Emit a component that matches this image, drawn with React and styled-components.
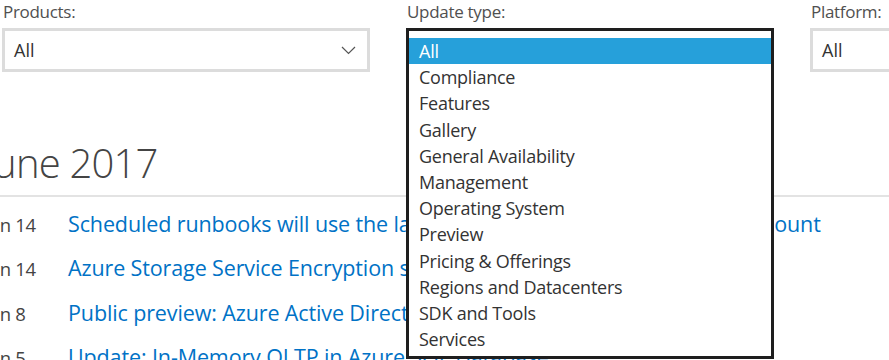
import React from 'react';
import styled, { createGlobalStyle } from 'styled-components';

const GlobalStyle = createGlobalStyle`
    html, body {
        margin: 0;
        padding: 0;
        overflow: hidden;
        background: #fff;
    }
    body {
        font-family: "Open Sans", "Noto Sans", sans-serif;
        color: #333;
    }
`;

const Page = styled.div`
    width: 889px;
    height: 360px;
    overflow: hidden;
`;

const FilterBar = styled.div`
    display: flex;
    gap: 36px;
    padding: 1px 0 0 2px;
`;

const Filter = styled.div`
    flex: 0 0 368px;
    display: flex;
    flex-direction: column;
`;

const Label = styled.label`
    font-size: 17px;
    line-height: 22px;
    color: #505050;
    padding-left: 1px;
    margin-bottom: 5px;
    letter-spacing: -0.3px;
`;

const Field = styled.div`
    position: relative;
    height: 44px;
`;

const SelectBox = styled.div`
    box-sizing: border-box;
    height: 44px;
    border: 3px solid #dcdcdc;
    display: flex;
    align-items: center;
    justify-content: space-between;
    padding: 0 11px 0 9px;
    font-size: 18px;
    color: #333;
`;

const Chevron = () => (
    <svg width="15" height="9" viewBox="0 0 15 9">
        <polyline points="1,1 7.5,7.5 14,1" fill="none" stroke="#555" strokeWidth="1.2" />
    </svg>
);

const Listbox = styled.ul`
    position: absolute;
    top: 0;
    left: 0;
    z-index: 10;
    box-sizing: border-box;
    width: 368px;
    margin: 0;
    padding: 7px 0 4px;
    list-style: none;
    background: #fff;
    border: 3px solid #1e1e1e;
`;

const Option = styled.li`
    height: 26.2px;
    line-height: 26px;
    padding-left: 10px;
    font-size: 18px;
    letter-spacing: -0.25px;
    color: ${p => (p.$selected ? '#fff' : '#333')};
    background: ${p => (p.$selected ? '#26a0da' : 'transparent')};
`;

const Month = styled.section`
    margin: 67px 0 0 -16px;
`;

const Heading = styled.h2`
    margin: 0;
    font-size: 40px;
    font-weight: 300;
    line-height: 48px;
    color: #444;
    padding-bottom: 8px;
    border-bottom: 2px solid #e3e3e3;
    letter-spacing: -0.8px;
`;

const List = styled.ul`
    list-style: none;
    margin: 0;
    padding: 12px 0 0;
`;

const Row = styled.li`
    display: flex;
    align-items: baseline;
    height: 44.4px;
`;

const DateCell = styled.span`
    flex: 0 0 84px;
    font-size: 18.5px;
    color: #444;
    letter-spacing: -0.3px;
`;

const TitleLink = styled.a`
    font-size: 21.5px;
    color: #0072c6;
    text-decoration: none;
    white-space: nowrap;
    letter-spacing: -0.12px;
`;

const updateTypes = [
    'All',
    'Compliance',
    'Features',
    'Gallery',
    'General Availability',
    'Management',
    'Operating System',
    'Preview',
    'Pricing & Offerings',
    'Regions and Datacenters',
    'SDK and Tools',
    'Services',
];

const updates = [
    { date: 'Jun 14', title: 'Scheduled runbooks will use the latest modules in your Automation account' },
    { date: 'Jun 14', title: 'Azure Storage Service Encryption support for Azure Files' },
    { date: 'Jun 8', title: 'Public preview: Azure Active Directory authentication for Azure SQL' },
    { date: 'Jun 5', title: 'Update: In-Memory OLTP in Azure SQL Database' },
];

function App() {
    return (
        <Page>
            <GlobalStyle />
            <FilterBar>
                <Filter>
                    <Label>Products:</Label>
                    <Field>
                        <SelectBox>
                            <span>All</span>
                            <Chevron />
                        </SelectBox>
                    </Field>
                </Filter>
                <Filter>
                    <Label>Update type:</Label>
                    <Field>
                        <SelectBox>
                            <span>All</span>
                            <Chevron />
                        </SelectBox>
                        <Listbox>
                            {updateTypes.map((t, i) => (
                                <Option key={t} $selected={i === 0}>{t}</Option>
                            ))}
                        </Listbox>
                    </Field>
                </Filter>
                <Filter>
                    <Label>Platform:</Label>
                    <Field>
                        <SelectBox>
                            <span>All</span>
                            <Chevron />
                        </SelectBox>
                    </Field>
                </Filter>
            </FilterBar>
            <Month>
                <Heading>June 2017</Heading>
                <List>
                    {updates.map(u => (
                        <Row key={u.title}>
                            <DateCell>{u.date}</DateCell>
                            <TitleLink href="#">{u.title}</TitleLink>
                        </Row>
                    ))}
                </List>
            </Month>
        </Page>
    );
}

export default App;
